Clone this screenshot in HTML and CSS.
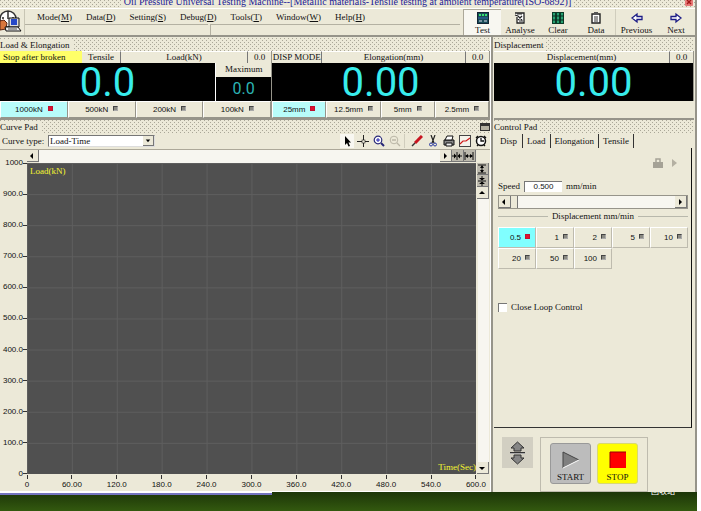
FILE: index.html
```html
<!DOCTYPE html>
<html lang="en">
<head>
    <meta charset="UTF-8">
    <meta name="viewport" content="width=device-width, initial-scale=1.0">
    <title>Oil Pressure Universal Testing Machine</title>
    <link rel="stylesheet" href="styles.css">
</head>
<body>

<div class="app">
    <header class="titlebar dots">
        <span class="title">Oil Pressure Universal Testing Machine--[Metallic materials-Tensile testing at ambient temperature(ISO-6892)]</span>
        <svg class="close" width="8" height="8" viewBox="0 0 8 8"><rect width="8" height="6" rx="1" fill="#e87878"/><path d="M2 0l4 4M6 0L2 4" stroke="#a01818" stroke-width="1.4"/></svg>
    </header>

    <div class="topbar">
        <svg class="logo" width="23" height="24" viewBox="0 0 23 24">
            <circle cx="8" cy="9" r="8" fill="#fff" stroke="#333" stroke-width="1.5"/>
            <path d="M8 1v8M2 8h2M12 8h2" stroke="#222" stroke-width="1.4"/>
            <path d="M9 8h10v9H9z" fill="#ddd" stroke="#111"/>
            <path d="M11 9h6v6h-6z" fill="#2548c8"/>
            <path d="M0 11l4-1 3 3-1 6-6 1z" fill="#d8763c" stroke="#5b2410"/>
            <path d="M5 17l13 0 3 4H6z" fill="#eee" stroke="#111"/>
            <path d="M8 19h9" stroke="#555"/>
        </svg>
        <div class="menu-area">
            <nav class="menu">
                <button>Mode(<u>M</u>)</button>
                <button>Data(<u>D</u>)</button>
                <button>Setting(<u>S</u>)</button>
                <button>Debug(<u>D</u>)</button>
                <button>Tools(<u>T</u>)</button>
                <button>Window(<u>W</u>)</button>
                <button>Help(<u>H</u>)</button>
            </nav>
            <div class="status"><span></span><span></span></div>
        </div>
        <div class="tools">
            <button class="on">
                <svg width="12" height="12" viewBox="0 0 12 12"><rect x=".5" y=".5" width="11" height="11" fill="#174b58" stroke="#123"/><path d="M2 3h2M5 3h2M8 3h2" stroke="#36e070" stroke-width="2"/><path d="M1 6h10" stroke="#36a"/><path d="M2 9h3M7 9h3" stroke="#9ab" stroke-width="1.5"/></svg>
                Test
            </button>
            <button>
                <svg width="12" height="12" viewBox="0 0 12 12"><path d="M1 1h9v10H3V5" fill="#fff" stroke="#222" stroke-width="1.3"/><path d="M1 3l3 1 4 4M4 8l4-4M3 2h5M5 9h4" stroke="#222" stroke-width="1.2" fill="none"/></svg>
                Analyse
            </button>
            <button>
                <svg width="12" height="12" viewBox="0 0 12 12"><rect width="12" height="12" fill="#0a3c28"/><path d="M2 1v10M6 1v10M10 1v10" stroke="#26a070" stroke-width="2"/><path d="M0 4h12M0 8h12" stroke="#0a2c20"/></svg>
                Clear
            </button>
            <button>
                <svg width="12" height="12" viewBox="0 0 12 12"><path d="M2 2h8v9H2z" fill="#fff" stroke="#222" stroke-width="1.4"/><path d="M4 0h4v3H4z" fill="#555"/><path d="M4 5h4M4 7h4M4 9h4" stroke="#333"/></svg>
                Data
            </button>
            <button class="wide">
                <svg width="12" height="12" viewBox="0 0 12 12"><path d="M1 6l5-4v2.500h5v3H6V10z" fill="#fff" stroke="#1c1c86" stroke-width="1.3"/></svg>
                Previous
            </button>
            <button>
                <svg width="12" height="12" viewBox="0 0 12 12"><path d="M11 6L6 2v2.500H1v3h5V10z" fill="#fff" stroke="#1c1c86" stroke-width="1.3"/></svg>
                Next
            </button>
        </div>
    </div>

    <div class="columns">
        <main class="left">
            <section class="gauges">
                <h2 class="dots"><span>Load &amp; Elongation</span></h2>
                <div class="gauge-row">
                    <div class="gauge load">
                        <div class="caption">
                            <button class="warn">Stop after broken</button>
                            <button class="mode">Tensile</button>
                            <span class="name">Load(kN)</span>
                            <button class="zero">0.0</button>
                        </div>
                        <div class="readout">
                            <output class="led">0.0</output>
                            <div class="maximum">
                                <span>Maximum</span>
                                <output class="led small">0.0</output>
                            </div>
                        </div>
                        <div class="ranges">
                            <button class="active">1000kN<i></i></button>
                            <button>500kN<i></i></button>
                            <button>200kN<i></i></button>
                            <button>100kN<i></i></button>
                        </div>
                    </div>
                    <div class="gauge">
                        <div class="caption">
                            <button class="mode disp">DISP MODE</button>
                            <span class="name">Elongation(mm)</span>
                            <button class="zero">0.0</button>
                        </div>
                        <div class="readout"><output class="led">0.00</output></div>
                        <div class="ranges">
                            <button class="active">25mm<i></i></button>
                            <button>12.5mm<i></i></button>
                            <button>5mm<i></i></button>
                            <button>2.5mm<i></i></button>
                        </div>
                    </div>
                </div>
            </section>

            <section class="curve">
                <h2 class="dots"><span>Curve Pad</span><b class="restore"></b></h2>
                <div class="curve-bar">
                    <label for="curve-type">Curve type:</label>
                    <div class="combo">
                        <select id="curve-type"><option>Load-Time</option></select>
                        <svg width="11" height="10" viewBox="0 0 11 10"><path d="M3 4h5L5.500 7z"/></svg>
                    </div>
                    <div class="curve-tools">
                        <button class="on" aria-label="Select"><svg width="12" height="12" viewBox="0 0 12 12"><path d="M4 1v9l2-2 1.500 3.500 1.500-.6L7.500 7.500H10z"/></svg></button>
                        <button aria-label="Cross"><svg width="12" height="12" viewBox="0 0 12 12"><path d="M0 6.500h12M6.500 0v12" stroke="#222"/><rect x="5" y="5" width="3" height="3" fill="#ece9d8" stroke="#222" stroke-width=".6"/></svg></button>
                        <button aria-label="Zoom in"><svg width="12" height="12" viewBox="0 0 12 12"><circle cx="5" cy="5" r="3.800" fill="#fff" stroke="#282878" stroke-width="1.200"/><path d="M3 5h4M5 3v4" stroke="#2020b0"/><path d="M8 8l3 3" stroke="#282878" stroke-width="2"/></svg></button>
                        <button aria-label="Zoom out"><svg width="12" height="12" viewBox="0 0 12 12"><circle cx="5" cy="5" r="3.800" fill="none" stroke="#bab6a6"/><path d="M3 5h4M8 8l3 3" stroke="#bab6a6" stroke-width="1.300"/></svg></button>
                        <button class="split" aria-label="Pen"><svg width="12" height="12" viewBox="0 0 12 12"><path d="M11 1L4 8" stroke="#c81420" stroke-width="3"/><path d="M4 8l-3 3" stroke="#333" stroke-width="1.500"/></svg></button>
                        <button aria-label="Cut"><svg width="12" height="12" viewBox="0 0 12 12"><path d="M4 0l3 8M8 0L5 8" stroke="#222" stroke-width="1.200"/><circle cx="4" cy="9.500" r="1.500" fill="none" stroke="#2838a0"/><circle cx="8" cy="9.500" r="1.500" fill="none" stroke="#2838a0"/></svg></button>
                        <button aria-label="Print"><svg width="12" height="12" viewBox="0 0 12 12"><path d="M1 5h10v5H1z" fill="#888" stroke="#111"/><path d="M4 1h6L9 5H2z" fill="#fff" stroke="#111"/><path d="M3 8h6v3H3z" fill="#eee" stroke="#111"/></svg></button>
                        <button aria-label="Chart"><svg width="12" height="12" viewBox="0 0 12 12"><rect x=".5" y=".5" width="11" height="11" fill="#f4f2ea" stroke="#444"/><path d="M1 9l3-3 3 0 4-3" fill="none" stroke="#d01818" stroke-width="1.200"/></svg></button>
                        <button aria-label="Timer"><svg width="12" height="12" viewBox="0 0 12 12"><circle cx="6" cy="6" r="4.500" fill="#fff" stroke="#111" stroke-width="1.500"/><path d="M6 3v3h3M1 3l2-2M11 3L9 1M2 11l1-1M10 11l-1-1" stroke="#111" stroke-width="1.300" fill="none"/></svg></button>
                    </div>
                </div>
                <div class="chart">
                    <div class="y-axis">
                        <span>1000</span><span>900.0</span><span>800.0</span><span>700.0</span><span>600.0</span><span>500.0</span><span>400.0</span><span>300.0</span><span>200.0</span><span>100.0</span><span>0</span>
                    </div>
                    <div class="hscroll">
                        <button class="box" aria-label="Left"><svg width="10" height="10" viewBox="0 0 10 10"><path d="M6 2v6L3 5z"/></svg></button>
                        <span class="track"></span>
                        <button class="box" aria-label="Right"><svg width="10" height="10" viewBox="0 0 10 10"><path d="M4 2v6l3-3z"/></svg></button>
                        <button class="box grey" aria-label="Shrink horizontally"><svg width="10" height="10" viewBox="0 0 10 10"><path d="M5 1v8M0 5h3M7 5h3" stroke="#111"/><path d="M2 2.500v5L4.500 5zM8 2.500v5L5.500 5z"/></svg></button>
                        <button class="box grey" aria-label="Stretch horizontally"><svg width="10" height="10" viewBox="0 0 10 10"><path d="M1 1v8M9 1v8M2 5h6" stroke="#111"/><path d="M4 3v4L1 5zM6 3v4l3-2z"/></svg></button>
                    </div>
                    <div class="plot">
                        <span class="y-name">Load(kN)</span>
                        <span class="x-name">Time(Sec)</span>
                    </div>
                    <div class="vscroll">
                        <button class="box grey" aria-label="Stretch vertically"><svg width="10" height="10" viewBox="0 0 10 10"><path d="M1 1h8M1 9h8M5 2v6" stroke="#111"/><path d="M3 4h4L5 1zM3 6h4L5 9z"/></svg></button>
                        <button class="box grey" aria-label="Shrink vertically"><svg width="10" height="10" viewBox="0 0 10 10"><path d="M1 5h8M5 0v3M5 7v3" stroke="#111"/><path d="M2 2h6L5 4.500zM2 8h6L5 5.500z"/></svg></button>
                        <button class="box" aria-label="Up"><svg width="10" height="10" viewBox="0 0 10 10"><path d="M2 6h6L5 3z"/></svg></button>
                        <span class="track"></span>
                        <button class="box" aria-label="Down"><svg width="10" height="10" viewBox="0 0 10 10"><path d="M2 4h6L5 7z"/></svg></button>
                    </div>
                    <div class="x-axis">
                        <span>0</span><span>60.00</span><span>120.0</span><span>180.0</span><span>240.0</span><span>300.0</span><span>360.0</span><span>420.0</span><span>480.0</span><span>540.0</span><span>600.0</span>
                    </div>
                </div>
            </section>
        </main>

        <aside class="right">
            <section class="gauges">
                <h2 class="dots"><span>Displacement</span></h2>
                <div class="gauge">
                    <div class="caption">
                        <span class="name">Displacement(mm)</span>
                        <button class="zero">0.0</button>
                    </div>
                    <div class="readout"><output class="led">0.00</output></div>
                </div>
            </section>

            <section class="control">
                <h2 class="dots"><span>Control Pad</span></h2>
                <div class="tabs">
                    <button class="current">Disp</button>
                    <button>Load</button>
                    <button>Elongation</button>
                    <button>Tensile</button>
                </div>
                <div class="pane">
                    <div class="lock">
                        <svg width="12" height="10" viewBox="0 0 12 10"><path d="M1 4h10v6H1z" fill="#a5a296"/><path d="M4 4V1h4v3" fill="none" stroke="#a5a296" stroke-width="1.500"/></svg>
                        <svg width="6" height="10" viewBox="0 0 6 10"><path d="M0 1v8l5-4z" fill="#b4b0a2"/></svg>
                    </div>
                    <div class="speed">
                        <label for="speed">Speed</label>
                        <input id="speed" type="text" value="0.500">
                        <span>mm/min</span>
                    </div>
                    <div class="slider">
                        <button class="box" aria-label="Slower"><svg width="10" height="10" viewBox="0 0 10 10"><path d="M6 2v6L3 5z"/></svg></button>
                        <span class="thumb"></span>
                        <span class="track"></span>
                        <button class="box" aria-label="Faster"><svg width="10" height="10" viewBox="0 0 10 10"><path d="M4 2v6l3-3z"/></svg></button>
                    </div>
                    <h3>Displacement mm/min</h3>
                    <div class="speeds">
                        <button class="active">0.5<i></i></button>
                        <button>1<i></i></button>
                        <button>2<i></i></button>
                        <button>5<i></i></button>
                        <button>10<i></i></button>
                        <button>20<i></i></button>
                        <button>50<i></i></button>
                        <button>100<i></i></button>
                    </div>
                    <label class="loop"><input type="checkbox">Close Loop Control</label>
                </div>
                <div class="actions">
                    <button class="jog" aria-label="Move crosshead"><svg width="17" height="24" viewBox="0 0 17 24"><path d="M8.500 1l6.500 6h-3v3H5V7H2zM8.500 23l6.500-6h-3v-3H5v3H2z" fill="#858585" stroke="#333"/><path d="M1 11.500h15" stroke="#333"/><path d="M1 12.500h15" stroke="#aaa"/></svg></button>
                    <div class="run">
                        <button class="start"><svg width="18" height="18" viewBox="0 0 18 18"><path d="M1 1v16l16-8z" fill="#808080"/><path d="M1 17V1l16 8" fill="none" stroke="#444"/><path d="M1 17l16-8" stroke="#fff"/></svg>START</button>
                        <button class="stop"><svg width="18" height="18" viewBox="0 0 18 18"><rect x="1" y="1" width="16" height="16" fill="#f00"/><path d="M1 17V1h16" fill="none" stroke="#900"/></svg>STOP</button>
                    </div>
                </div>
            </section>
        </aside>
    </div>
</div>

<div class="desktop">
    <span class="task"></span>
    <span class="shortcut">回收站</span>
</div>

</body>
</html>
```
FILE: styles.css
```css
* {
    box-sizing: border-box;
}
body {
    margin: 0;
    padding-right: 4px;
    height: 100vh;
    display: flex;
    flex-direction: column;
    background: #fff;
    font: 9px/12px "Liberation Serif", serif;
    color: #111;
    overflow: hidden;
}
button, input, select {
    font: inherit;
    color: inherit;
    margin: 0;
    padding: 0;
    border: 0;
    background: none;
    white-space: nowrap;
}
svg {
    flex: none;
    display: block;
}
h2, h3 {
    margin: 0;
    font-size: 9px;
    font-weight: normal;
}
.app {
    flex: 1;
    min-height: 0;
    display: flex;
    flex-direction: column;
    background: #ece9d8;
    border-right: 2px solid #96948a;
}
.dots {
    background-color: #ece9d8;
    background-image: linear-gradient(#b4b1a2, #b4b1a2), linear-gradient(#b4b1a2, #b4b1a2);
    background-size: 4px 4px;
    background-position: 0 0, 2px 2px;
    background-image: conic-gradient(from 270deg at 1px 1px, #aaa798 90deg, transparent 0), conic-gradient(from 270deg at 1px 1px, #aaa798 90deg, transparent 0);
}

/* title and menu */
.titlebar {
    height: 8px;
    display: flex;
    justify-content: center;
    overflow: hidden;
    position: relative;
    flex: none;
    color: #1c1c96;
}
.title {
    background: #ece9d8;
    font-size: 10px;
    line-height: 4px;
    padding: 0 2px;
    white-space: nowrap;
}
.close {
    position: absolute;
    right: 2px;
    top: 0;
}
.topbar {
    height: 29px;
    flex: none;
    display: flex;
    border-top: 1px solid #fff;
    border-bottom: 2px solid #96948a;
}
.logo {
    margin: 1px 0 0;
}
.menu-area {
    flex: 1;
    display: flex;
    flex-direction: column;
    border-left: 1px solid #c8c5b4;
    margin-left: 1px;
}
.menu {
    height: 15px;
    padding-left: 12px;
    display: flex;
    gap: 14px;
    align-items: center;
}
.status {
    flex: 1;
    display: flex;
    gap: 2px;
}
.status span {
    flex: 1;
    border-top: 1px solid #b4b1a2;
    border-left: 1px solid #b4b1a2;
}
.status span:first-child {
    flex: 0 0 42%;
    border-left: 0;
}
.tools {
    display: flex;
    margin-left: 3px;
}
.tools button {
    width: 38px;
    display: flex;
    flex-direction: column;
    align-items: center;
    padding-top: 3px;
}
.tools .on {
    background: #f8f7f1;
    border-left: 1px solid #aca899;
    border-top: 1px solid #aca899;
    padding-top: 2px;
}
.tools .wide {
    width: 42px;
    border-left: 1px solid #d0cdbd;
}

/* columns */
.columns {
    flex: 1;
    min-height: 0;
    display: grid;
    grid-template-columns: minmax(0, 1fr) 204px;
}
.left, .right {
    display: flex;
    flex-direction: column;
    min-width: 0;
    min-height: 0;
}
.left {
    border-right: 1px solid #fff;
}
.right {
    border-left: 2px solid #96948a;
    padding: 0 1px;
}
h2 {
    height: 13px;
    flex: none;
    display: flex;
    justify-content: space-between;
    align-items: center;
}
h2 span {
    background: #ece9d8;
    padding-right: 3px;
}

/* readouts */
.gauges {
    height: 83px;
    flex: none;
    border-bottom: 2px solid #96948a;
    padding-top: 1px;
}
.gauge-row {
    display: grid;
    grid-template-columns: 5fr 4fr;
}
.gauge {
    border-right: 1px solid #96948a;
    min-width: 0;
}
.caption {
    height: 12px;
    display: flex;
}
.caption > * {
    border-right: 1px solid #777;
    border-top: 1px solid #fff;
    text-align: center;
    line-height: 11px;
}
.caption .name {
    flex: 1;
}
.caption .warn {
    width: 82px;
    padding-left: 3px;
    text-align: left;
    background: #ffff68;
    border-color: #ffff68;
}
.caption .mode {
    width: 39px;
}
.caption .disp {
    width: 50px;
}
.caption .zero {
    width: 23px;
    border-right: 0;
}
.readout {
    display: flex;
    height: 38px;
    background: #000;
}
.led {
    flex: 1;
    text-align: center;
    color: #38ecec;
    font: 40px/40px Roboto, "Liberation Sans", sans-serif;
}
.maximum {
    width: 56px;
    border-left: 1px solid #fff;
    display: flex;
    flex-direction: column;
}
.maximum span {
    background: #ece9d8;
    height: 14px;
    text-align: center;
}
.led.small {
    font-size: 16px;
    line-height: 24px;
    color: #2cb4b4;
}
.ranges {
    display: grid;
    grid-template-columns: repeat(4, 1fr);
}
.ranges button {
    height: 17px;
    display: flex;
    justify-content: center;
    align-items: center;
    gap: 5px;
    font: 8px "Liberation Sans", sans-serif;
    border: 1px solid #fff;
    border-right-color: #96948a;
    border-bottom-color: #96948a;
}
i {
    width: 5px;
    height: 5px;
    margin-bottom: 3px;
    background: #8a8a82;
    border: 1px solid #444;
    border-right-color: #aaa;
    border-bottom-color: #aaa;
}
.ranges .active {
    background: #b8fcfa;
}
.active i {
    background: #e01030;
    border-color: #c01030;
}

/* curve pad */
.curve {
    flex: 1;
    min-height: 0;
    display: flex;
    flex-direction: column;
}
.restore {
    width: 10px;
    height: 8px;
    border: 1px solid #333;
    border-top-width: 3px;
    background: #b4b1a2;
}
.curve-bar {
    height: 17px;
    flex: none;
    display: flex;
    align-items: center;
    padding-left: 2px;
    border-bottom: 1px solid #aca899;
}
.curve-bar label {
    width: 46px;
}
.combo {
    position: relative;
    width: 107px;
    height: 12px;
    background: #fff;
    border: 1px solid #777;
    border-right-color: #ddd;
    border-bottom-color: #ddd;
}
.combo select {
    appearance: none;
    width: 100%;
    height: 10px;
    line-height: 10px;
    padding-left: 1px;
    display: block;
}
.combo svg {
    position: absolute;
    right: 0;
    top: 0;
    background: #ece9d8;
    border-right: 1px solid #777;
    border-bottom: 1px solid #777;
    pointer-events: none;
}
.curve-tools {
    margin-left: auto;
    margin-right: 2px;
    display: flex;
    gap: 2px;
}
.curve-tools button {
    width: 14px;
    height: 14px;
    padding: 1px;
}
.curve-tools .on {
    background: #f8f7f1;
}
.curve-tools .split {
    width: 20px;
    padding-left: 6px;
    border-left: 1px solid #d0cdbd;
}
.chart {
    flex: 1;
    min-height: 0;
    display: grid;
    grid-template-columns: 27px minmax(0, 1fr) 14px;
    grid-template-rows: 13px minmax(0, 1fr) 17px;
    font: 8px/8px "Liberation Sans", sans-serif;
    border-bottom: 1px solid #fff;
}
.hscroll {
    grid-area: 1 / 2;
    display: flex;
}
.vscroll {
    grid-area: 2 / 3;
    display: flex;
    flex-direction: column;
    align-items: center;
}
.track {
    flex: 1;
    background: #f7f6f0;
}
.vscroll .track {
    width: 11px;
}
.box {
    width: 12px;
    height: 12px;
    flex: none;
    background: #ece9d8;
    border-right: 1px solid #777;
    border-bottom: 1px solid #777;
}
.box.grey {
    background: #bcb9ad;
}
.y-axis {
    grid-area: 2 / 1;
    display: flex;
    flex-direction: column;
    justify-content: space-between;
    align-items: flex-end;
}
.y-axis span {
    height: 0;
    line-height: 0;
    display: flex;
    align-items: center;
}
.y-axis span::after {
    content: "";
    width: 4px;
    height: 1px;
    background: #333;
}
.plot {
    grid-area: 2 / 2;
    display: flex;
    flex-direction: column;
    justify-content: space-between;
    padding: 4px 0 2px 3px;
    font: 9px/9px "Liberation Serif", serif;
    color: #f4f430;
    background-color: #505050;
    background-image: linear-gradient(to right, #5e5e5e 1px, transparent 1px), linear-gradient(#5e5e5e 1px, transparent 1px);
    background-size: 10% 10%;
    overflow: hidden;
}
.x-name {
    align-self: flex-end;
}
.x-axis {
    grid-area: 3 / 2;
    display: flex;
    justify-content: space-between;
}
.x-axis span {
    width: 0;
    display: flex;
    flex-direction: column;
    align-items: center;
    gap: 2px;
    padding-top: 1px;
}
.x-axis span::before {
    content: "";
    width: 1px;
    height: 4px;
    flex: none;
    background: #333;
}

/* control pad */
.control {
    flex: 1;
    min-height: 0;
    display: flex;
    flex-direction: column;
}
.tabs {
    display: flex;
    height: 14px;
    margin-top: 1px;
}
.tabs button {
    padding: 0 4px;
    border-right: 1px solid #333;
}
.tabs .current {
    padding: 0 5px 0 6px;
}
.pane {
    flex: 1;
    min-height: 0;
    border-right: 1px solid #111;
    border-bottom: 1px solid #333;
    margin-right: 2px;
    padding: 10px 3px 0 4px;
}
.lock {
    display: flex;
    justify-content: flex-end;
    gap: 8px;
    padding-right: 10px;
}
.speed {
    display: flex;
    align-items: center;
    gap: 4px;
    margin: 12px 0 3px;
}
.speed input {
    width: 38px;
    height: 11px;
    background: #fff;
    border-left: 1px solid #777;
    border-top: 1px solid #777;
    text-align: center;
    font: 8px "Liberation Sans", sans-serif;
}
.slider {
    display: flex;
    border: 1px solid #96948a;
}
.thumb {
    width: 7px;
    background: #ece9d8;
    border-right: 1px solid #777;
}
h3 {
    display: flex;
    align-items: center;
    gap: 4px;
    margin: 1px 0 5px;
}
h3::before, h3::after {
    content: "";
    flex: 1;
    height: 1px;
    background: #b8b8ac;
}
.speeds {
    display: grid;
    grid-template-columns: repeat(5, 1fr);
}
.speeds button {
    height: 21px;
    display: flex;
    align-items: center;
    justify-content: flex-end;
    gap: 4px;
    padding-right: 5px;
    font: 8px "Liberation Sans", sans-serif;
    border: 1px solid #bebbae;
    border-top-color: #fff;
    border-left-color: #fff;
}
.speeds .active {
    background: #80ffff;
}
.loop {
    display: flex;
    align-items: center;
    gap: 4px;
    margin-top: 32px;
}
.loop input {
    appearance: none;
    width: 9px;
    height: 9px;
    background: #fff;
    border-left: 1px solid #777;
    border-top: 1px solid #777;
}
.actions {
    display: flex;
    align-items: flex-start;
    gap: 7px;
    padding: 9px 0 0 8px;
}
.jog {
    width: 31px;
    height: 31px;
    display: grid;
    place-items: center;
    background: #d2cfc2;
}
.run {
    display: flex;
    gap: 6px;
    padding: 5px 9px 7px;
    border: 1px solid #bebbae;
}
.run button {
    width: 41px;
    height: 41px;
    display: flex;
    flex-direction: column;
    align-items: center;
    justify-content: flex-end;
    gap: 2px;
    border: 1px solid #999;
    border-radius: 3px;
    background: #bcbcbc;
}
.run .stop {
    background: #ff0;
    border-color: #d8d870;
}

/* desktop behind the window */
.desktop {
    height: 19px;
    flex: none;
    display: flex;
    justify-content: space-between;
    align-items: flex-start;
    overflow: hidden;
    background: linear-gradient(#1c3508, #33590f);
}
.task {
    width: 39%;
    height: 3px;
    background: #7474c0;
    border-top: 1px solid #fff;
}
.shortcut {
    height: 3px;
    margin-right: 22px;
    display: flex;
    align-items: flex-end;
    overflow: hidden;
    color: #fff;
    font: 8px/8px "Noto Sans CJK SC", sans-serif;
}
```
